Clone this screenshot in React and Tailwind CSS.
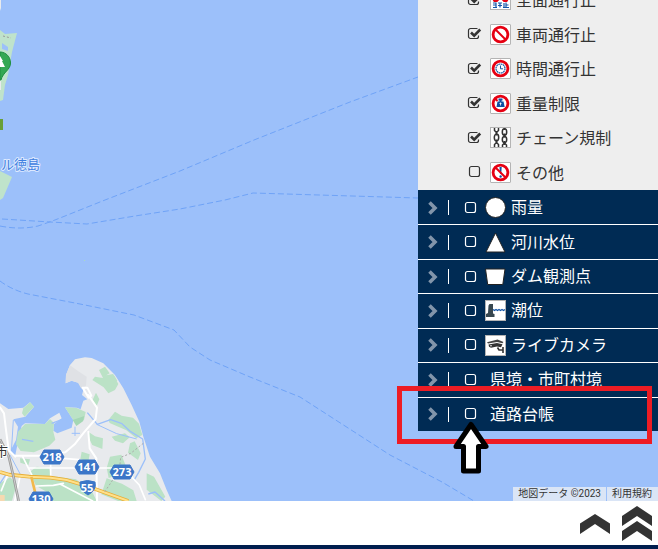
import React from "react";

function Prohibition({ slash = true, children }) {
  return (
    <svg viewBox="0 0 21 21" className="size-[21px] shrink-0" aria-hidden="true">
      <rect x="0.5" y="0.5" width="20" height="20" rx="0.5" fill="#fff" stroke="#b4b4b4" />
      <circle cx="10.5" cy="10.5" r="7.4" fill="#fff" stroke="#e60012" strokeWidth="2.8" />
      {children}
      {slash && <path d="M5.5 5.5 L15.5 15.5" stroke="#e60012" strokeWidth="2" />}
    </svg>
  );
}

function FullClosureIcon() {
  return (
    <svg viewBox="0 0 21 21" className="size-[21px] shrink-0" aria-hidden="true">
      <rect x="0.5" y="0.5" width="20" height="20" fill="#fff" stroke="#b4b4b4" />
      <circle cx="10.5" cy="8" r="7" fill="#fff" stroke="#e60012" strokeWidth="2.6" />
      <path d="M5 2.5 L16 13.5 M16 2.5 L5 13.5" stroke="#e60012" strokeWidth="2.4" />
      <rect x="2" y="13" width="17" height="6" fill="#fff" />
      <path
        d="M3 14h3v4M3 16h3M3 18.5h4M8 14h4M10 14v4.5M8 16.5h4M14 14v4.5M16 13.5v5M16 16h2.5M13 18.5h6"
        stroke="#1456a8"
        strokeWidth="1.2"
        fill="none"
      />
    </svg>
  );
}

function ClockBanIcon() {
  return (
    <Prohibition slash={false}>
      <circle cx="10.5" cy="10.5" r="4.5" fill="#fff" stroke="#1456a8" strokeWidth="1.2" strokeDasharray="1.8 .5" />
      <path d="M10.5 7.5v3.300h2.500" fill="none" stroke="#1456a8" strokeWidth="1" />
    </Prohibition>
  );
}

function WeightBanIcon() {
  return (
    <Prohibition slash={false}>
      <path d="M8.5 5.5h4v2h-1v1h2l1.200 5.500H6.500L7.500 8.500h2v-1h-1z" fill="#0d4ea2" />
      <path d="M10.500 9.500v3M9.500 10.500h2" stroke="#fff" strokeWidth=".8" />
      <path d="M4.500 5l3 3" stroke="#e60012" strokeWidth="2" />
    </Prohibition>
  );
}

function OtherBanIcon() {
  return (
    <Prohibition>
      <path d="M9.500 5h2.200l-.5 7h-1.200z" fill="#0d4ea2" />
      <circle cx="10.600" cy="14.500" r="1.200" fill="#0d4ea2" />
    </Prohibition>
  );
}

function ChainIcon() {
  return (
    <svg viewBox="0 0 21 21" className="size-[21px] shrink-0" aria-hidden="true">
      <rect x="0.5" y="0.5" width="20" height="20" fill="#fff" stroke="#b4b4b4" />
      <g fill="none" stroke="#333" strokeWidth="1.500">
        <path d="M4.500 1v2.500l2 2 2-2V1M4.500 20v-2.500l2-2 2 2V20M12.500 20v-2l2-2 2 2v2" />
        <ellipse cx="6.500" cy="10.500" rx="2.200" ry="3.400" />
        <ellipse cx="14.500" cy="5" rx="2.200" ry="3.200" />
        <ellipse cx="14.500" cy="12.500" rx="2.200" ry="3" />
        <path d="M6.500 4.500v4M6.500 12.500v4M14.500 1v2M14.500 6.500v4M14.500 14v4" />
      </g>
    </svg>
  );
}

function RainIcon() {
  return (
    <svg viewBox="0 0 21 21" className="size-[21px] shrink-0" aria-hidden="true">
      <circle cx="10.500" cy="10.500" r="10" fill="#fff" stroke="#222" />
    </svg>
  );
}

function RiverIcon() {
  return (
    <svg viewBox="0 0 21 21" className="size-[21px] shrink-0" aria-hidden="true">
      <path d="M10.500 1 L20 20 H1 Z" fill="#fff" stroke="#222" />
    </svg>
  );
}

function DamIcon() {
  return (
    <svg viewBox="0 0 21 21" className="size-[21px] shrink-0" aria-hidden="true">
      <path d="M.5 3 H20 L17.800 18.500 H2.700 Z" fill="#fff" stroke="#222" />
    </svg>
  );
}

function TideIcon() {
  return (
    <svg viewBox="0 0 21 21" className="size-[21px] shrink-0" aria-hidden="true">
      <rect x="0.5" y="0.5" width="20" height="20" fill="#fff" stroke="#b4b4b4" />
      <path d="M3.500 5.500l1-1.500h3.500v9.500l1.500.5v3H1v-3l2-1z" fill="#37474f" />
      <path d="M8 9.500l1.500 1 1.500-1 1.500 1 1.500-1 1.500 1 1.500-1 1.500 1 1.500-1" fill="none" stroke="#1456a8" strokeWidth="1.200" />
    </svg>
  );
}

function CameraIcon() {
  return (
    <svg viewBox="0 0 21 21" className="size-[21px] shrink-0" aria-hidden="true">
      <rect x="0.5" y="0.5" width="20" height="20" fill="#fff" stroke="#b4b4b4" />
      <path d="M2 7.200L12.500 4.500 18.500 7l-1 1.200L12 7 3 8.500z" fill="#444" />
      <path d="M3.500 9.500L12 8l5.500 1.200-1.500 3-4-.7-6 1.300-2-1z" fill="#333" />
      <path d="M12.500 12.500l1.500 2.500h3.500M18 12v6" fill="none" stroke="#333" strokeWidth="1.600" />
      <circle cx="6" cy="10.800" r=".8" fill="#fff" />
    </svg>
  );
}

const roadItems = [
  { id: "full", label: "全面通行止", Icon: FullClosureIcon, on: true },
  { id: "vehicle", label: "車両通行止", Icon: Prohibition, on: true },
  { id: "time", label: "時間通行止", Icon: ClockBanIcon, on: true },
  { id: "weight", label: "重量制限", Icon: WeightBanIcon, on: true },
  { id: "chain", label: "チェーン規制", Icon: ChainIcon, on: true },
  { id: "other", label: "その他", Icon: OtherBanIcon, on: false },
];

const layerItems = [
  { id: "rain", label: "雨量", Icon: RainIcon },
  { id: "river", label: "河川水位", Icon: RiverIcon },
  { id: "dam", label: "ダム観測点", Icon: DamIcon },
  { id: "tide", label: "潮位", Icon: TideIcon },
  { id: "camera", label: "ライブカメラ", Icon: CameraIcon },
  { id: "border", label: "県境・市町村境" },
  { id: "ledger", label: "道路台帳" },
];

function Tick({ id, on = false }) {
  return (
    <span className="grid size-4 shrink-0 place-items-center">
      <input
        id={id}
        type="checkbox"
        defaultChecked={on}
        className="peer col-start-1 row-start-1 size-4 cursor-pointer appearance-none"
      />
      <svg viewBox="0 0 16 16" className="pointer-events-none col-start-1 row-start-1 size-4 peer-checked:hidden" aria-hidden="true">
        <rect x="2.500" y="2.500" width="10" height="10" rx="2" fill="none" stroke="currentColor" strokeWidth="1.200" />
      </svg>
      <svg viewBox="0 0 16 16" className="pointer-events-none col-start-1 row-start-1 hidden size-4 peer-checked:block" aria-hidden="true">
        <path d="M11.500 9.500v1a2 2 0 0 1-2 2H3.500a2 2 0 0 1-2-2v-6a2 2 0 0 1 2-2h6a2 2 0 0 1 1 .2" fill="none" stroke="currentColor" strokeWidth="1.200" />
        <path d="M4 6.500l3.200 3.200 6-6.200" fill="none" stroke="currentColor" strokeWidth="2.600" />
      </svg>
    </span>
  );
}

function Shield({ x, y, children }) {
  return (
    <g>
      <path d={`M${x - 12} ${y} l4 -7 h16 l4 7 -4 7 h-16z`} fill="#3b76c8" stroke="#3b76c8" strokeLinejoin="round" />
      <text x={x} y={y + 4} textAnchor="middle" fontSize="11" fontWeight="700" fill="#fff">
        {children}
      </text>
    </g>
  );
}

function MapDrawing() {
  return (
    <svg viewBox="0 0 658 501" preserveAspectRatio="xMinYMin slice" className="absolute inset-0 size-full" role="img" aria-label="地図">
      <rect width="658" height="501" fill="#9cc0fa" />
      <g fill="none" stroke="#6fa3f7" strokeDasharray="6 3">
        <path d="M0 226 Q20 230 38 226 Q50 222 60 218 L105 200 180 171 254 140 350 102 418 77" />
        <path d="M2 219 L50 222 87 224 135 216 180 209 225 200 253 193 418 198" />
        <path d="M0 281 Q12 290 28 294 L80 304 134 315 174 330 190 347 210 360 250 377 300 397 390 455 442 482 474 501" />
      </g>
      <path d="M84 260h1v1h-1z" fill="#a9dcc0" />

      <path d="M0 30 L5 34 17 33 12 52 8 75 5 85 3 100 0 101Z" fill="#bfe3cb" />
      <path d="M2 43l6 4v4l-6-2z" fill="#9cc0fa" />
      <path d="M3 36l8 2" stroke="#999" strokeDasharray="2 2" />
      <path d="M0 0h1v8l-1 3z" fill="#e8eaed" />
      <path d="M0 171 L12 177 3 198 0 200Z" fill="#bfe3cb" />
      <path d="M0 80h1v10H0z" fill="#e8eaed" />
      <path d="M0 52 C6 52 10.500 57 10.500 63 C10.500 70 3 72 1 80 H0Z" fill="#34a853" stroke="#1e8e3e" />
      <path d="M0 56l3 5H2l3 6H0z" fill="#fff" />
      <rect x="0" y="119" width="3" height="11" fill="#689f38" />

      <g transform="translate(0 340) scale(.33333)">
        <path
          d="M0 190 L25 207 70 203 90 187 102 200 76 230 40 238 54 260 48 300 30 335 45 350 55 300 65 258 75 250 135 252 150 235 178 218 185 235 162 252 160 272 172 280 215 263 220 240 195 202 230 203 262 215 285 230 260 218 242 207 250 182 262 178 246 165 250 150 235 128 215 122 197 130 198 105 210 75 225 58 255 52 275 54 310 70 345 105 370 145 395 195 418 245 430 290 450 350 480 400 500 450 515 483 H0Z"
          fill="#e8eaed"
        />
        <path d="M210 76l25 18 25 16-2 28-14 8-10-18-20-6-17 8 1-26z" fill="#dfe1e5" />
        <g fill="#bbe2c6">
          <path d="M70 205l20-18 12 13-28 30-8-10z" />
          <path d="M75 252h60l15-15 12 12-2 26 6 24-18 18-46 20-40-4-14-20 6-38z" />
          <path d="M195 202l35 2 27 12-5 24-22 12-12-14z" />
          <path d="M297 90l18-10 14 20-10 6 20-4 16 30-10 18-20 10-14-18-34-22 8-10 24 4z" />
          <path d="M288 158l10 20-8 20-14-14zM325 240l20-25 20 12 34 6 18 18 10 34-18 10-30-24-50-22z" />
          <path d="M265 275l20 14 24 6-2 32-30-12-12-24zM335 290l40-10 14 12-20 18-24-8z" />
          <path d="M390 310l14-6 18 36-8 20-30-22zM330 350l34-6 16 40-24 20-30 10-6-30z" />
          <path d="M110 380l38 4 4 24 76 10 50 40 12 25H160l-18-26-34-20-20-40zM320 415l46 16 34 20 10 32h-56l-50-20z" />
          <path d="M440 400l22 10 34 60-12 13-44-34zM0 430l30-18 20 20-14 50H0zM60 355l30 3-5 18-24-8zM245 335l24 8-4 22-24-8zM340 102l12 20-12 6z" />
        </g>
        <path d="M218 240l35-12-4 16-20 14z" fill="#a4d7b4" />
        <g fill="none" stroke="#9cc0fa" strokeLinejoin="round">
          <path d="M262 218l30 35 40-14 34 12 26 24 36 22 8 60-20 40-14 24" strokeWidth="4" />
          <path d="M290 253l60 28 60 16M215 280h25M225 260v28M40 240l-6 98M30 345l32 60" strokeWidth="3" />
          <path d="M66 298l34 6M155 250l38-14 20 20M445 462l20-6 30 27M0 430l20-30" strokeWidth="4" />
        </g>
        <g fill="none" stroke="#fff" strokeLinecap="round" strokeLinejoin="round">
          <path d="M0 202l12 18 6 50 8 60 20 20M248 143l14 0 12 24-8 6zM265 165l26 38-4 34-35 40-28 36-28 24-72 10H45M265 275l4 50 20 30 2 128" strokeWidth="6" />
          <path d="M88 384h262l44 26 24 25 18 44M68 350l28 56M190 355l46 4 18 20M152 370v44M180 432l98 51M110 438l50-2 30-6M60 410l-16 73M24 402l-20 50" strokeWidth="5" />
        </g>
        <g fill="none">
          <path d="M0 396l28 8 60 6 64 3 48 7 60 18 125 45" stroke="#e8ae38" strokeWidth="11" />
          <path d="M0 396l28 8 60 6 64 3 48 7 60 18 125 45" stroke="#ffe08a" strokeWidth="6" />
          <path d="M94 411l18 72" stroke="#f2b94b" strokeWidth="8" />
          <path d="M0 298l26 50 14 60 16 75" stroke="#9a9a9a" strokeWidth="8" />
          <path d="M0 298l26 50 14 60 16 75" stroke="#ccc" strokeWidth="3" />
          <path d="M430 310l-38 30-30 12-4 40-24 34-20 30" stroke="#aaa" strokeWidth="3" strokeDasharray="6 6" />
        </g>
        <rect x="0" y="465" width="14" height="18" fill="#f6d9b0" />
      </g>

      <g className="font-['Open_Sans','Noto_Sans',sans-serif]">
        <Shield x={52} y={457}>218</Shield>
        <Shield x={87} y={467}>141</Shield>
        <Shield x={122} y={472}>273</Shield>
        <Shield x={41} y={499}>130</Shield>
        <path d="M80 482 Q87.500 479 95 482 Q97 490 88 495 Q79 490 80 482Z" fill="#3b76c8" stroke="#3b76c8" strokeLinejoin="round" />
        <text x="87" y="492" textAnchor="middle" fontSize="11" fontWeight="700" fill="#fff">55</text>
      </g>
      <g className="font-['Noto_Sans_CJK_JP',sans-serif]" strokeLinejoin="round" paintOrder="stroke">
        <text x="40" y="169" textAnchor="end" fontSize="13" fill="#3f7fe0" stroke="#dce9ff" strokeWidth="2">ル徳島</text>
        <text x="8" y="456" textAnchor="end" fontSize="13" fill="#333" stroke="#fff" strokeWidth="2">市</text>
      </g>
    </svg>
  );
}

function RoadList() {
  return (
    <div className="flex h-[190px] flex-col justify-end overflow-hidden bg-[#eeeeee] text-[#333]">
      <ul className="grid h-[207px] shrink-0 grid-rows-6">
        {roadItems.map(({ id, label, Icon, on }) => (
          <li key={id} className="flex items-center pb-px pl-[49px]">
            <Tick id={id} on={on} />
            <label htmlFor={id} className="ml-[7px] flex items-center gap-[5px]">
              <Icon />
              <span className="pb-px">{label}</span>
            </label>
          </li>
        ))}
      </ul>
    </div>
  );
}

function LayerList() {
  return (
    <ul className="grid h-[241px] grid-rows-7 bg-[#002b54] text-white">
      {layerItems.map(({ id, label, Icon }) => (
        <li key={id} className="flex items-center border-t border-white pl-2 first:border-[#002b54]">
          <button type="button" aria-label={`${label}を開く`} className="flex w-[22px] pl-[2px] text-[#8295aa]">
            <svg viewBox="0 0 10 14" className="h-[14px] w-[10px]" aria-hidden="true">
              <path d="M1.500 1.500 L7 7 1.500 12.500" fill="none" stroke="currentColor" strokeWidth="3.600" />
            </svg>
          </button>
          <span className="h-[15px] w-px bg-white" />
          <span className="ml-[14px] flex">
            <Tick id={id} />
          </span>
          <label htmlFor={id} className="ml-[6px] flex items-center gap-[5px]">
            {Icon ? <Icon /> : <span />}
            <span className="pb-[3px]">{label}</span>
          </label>
        </li>
      ))}
    </ul>
  );
}

export default function App() {
  return (
    <div className="flex h-screen flex-col bg-white font-['Noto_Sans_CJK_JP',sans-serif] text-base leading-6">
      <main className="relative flex min-h-0 flex-1 flex-col items-end justify-between overflow-hidden bg-[#9cc0fa]">
        <MapDrawing />
        <aside className="relative w-60">
          <RoadList />
          <LayerList />
          <div className="pointer-events-none absolute top-[386px] right-[6px] h-[58px] w-[255px] border-5 border-[#ed1c24]" />
          <svg viewBox="0 0 36 54" className="pointer-events-none absolute top-[420px] left-[35px] h-[54px] w-9" aria-hidden="true">
            <path d="M18 4.500 L33 26.500 H25.500 V51 H10.500 V26.500 H3 Z" fill="#fff" stroke="#000" strokeWidth="5" strokeLinejoin="round" />
          </svg>
        </aside>
        <div className="relative flex gap-px font-[Roboto,'Noto_Sans_CJK_JP',sans-serif] text-[10px] leading-[14px] text-[#333]">
          <span className="bg-[#dae5f6] px-[5px]">地図データ ©2023</span>
          <a href="#terms" className="bg-[#dae5f6] pr-[6px] pl-[5px]">利用規約</a>
        </div>
      </main>
      <footer className="flex h-12 shrink-0 items-center justify-end gap-3 border-b-4 border-[#001e4e] pr-[6px]">
        <button type="button" aria-label="上へ">
          <svg viewBox="0 0 30 36" className="h-9 w-[30px]" aria-hidden="true">
            <path d="M0 18.500 L15 9 30 18.500 V29 L15 19 0 29Z" fill="#333" />
          </svg>
        </button>
        <button type="button" aria-label="ページの先頭へ">
          <svg viewBox="0 0 30 36" className="h-9 w-[30px]" aria-hidden="true">
            <path d="M0 11 L15 1 30 11 V21 L15 11 0 21ZM0 26 L15 16 30 26 V36 L15 26 0 36Z" fill="#333" />
          </svg>
        </button>
      </footer>
    </div>
  );
}
